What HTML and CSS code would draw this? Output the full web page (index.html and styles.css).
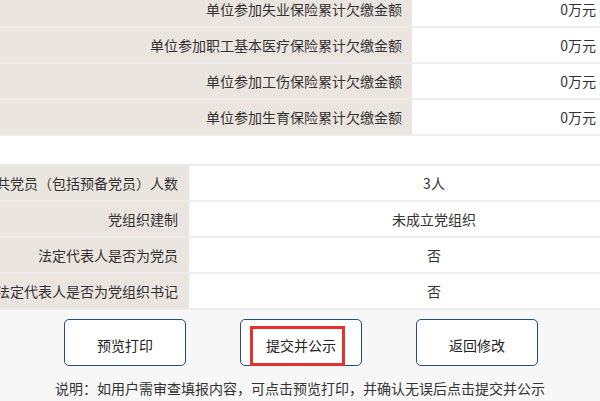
FILE: index.html
```html
<!DOCTYPE html>
<html lang="zh-CN">
<head>
<meta charset="utf-8">
<title>年报确认</title>
<link rel="stylesheet" href="styles.css">
</head>
<body>
<div class="page">
  <div class="table table-top">
    <div class="row"><div class="label">单位参加失业保险累计欠缴金额</div><div class="value">0万元</div></div>
    <div class="row"><div class="label">单位参加职工基本医疗保险累计欠缴金额</div><div class="value">0万元</div></div>
    <div class="row"><div class="label">单位参加工伤保险累计欠缴金额</div><div class="value">0万元</div></div>
    <div class="row"><div class="label">单位参加生育保险累计欠缴金额</div><div class="value">0万元</div></div>
  </div>
  <div class="table table-party">
    <div class="row"><div class="label">共党员（包括预备党员）人数</div><div class="value">3人</div></div>
    <div class="row"><div class="label">党组织建制</div><div class="value">未成立党组织</div></div>
    <div class="row"><div class="label">法定代表人是否为党员</div><div class="value">否</div></div>
    <div class="row"><div class="label">法定代表人是否为党组织书记</div><div class="value">否</div></div>
  </div>
  <div class="actions">
    <div class="buttons">
      <button class="btn" type="button">预览打印</button>
      <button class="btn btn-marked" type="button">提交并公示<span class="mark"></span></button>
      <button class="btn" type="button">返回修改</button>
    </div>
    <p class="note">说明：如用户需审查填报内容，可点击预览打印，并确认无误后点击提交并公示</p>
  </div>
</div>
</body>
</html>
```

FILE: styles.css
```css
* { box-sizing: border-box; }
html, body {
  margin: 0;
  padding: 0;
  background: #ffffff;
}
body {
  font-family: "Noto Sans CJK SC", "Liberation Sans", sans-serif;
  font-size: 14px;
  color: #333333;
}
.page {
  width: 600px;
  height: 401px;
  overflow: hidden;
}
.table .row {
  display: flex;
  height: 36px;
  border-bottom: 2px solid #ececec;
}
.table .label {
  background: #ebe5df;
  display: flex;
  align-items: center;
  justify-content: flex-end;
  white-space: nowrap;
}
.table .value {
  display: flex;
  align-items: center;
  white-space: nowrap;
  background: #ffffff;
}
.table-top {
  margin-top: -8px;
}
.table-top .label {
  width: 412px;
  padding-right: 10px;
}
.table-top .value {
  flex: 1;
  justify-content: flex-end;
  padding-right: 4px;
}
.table-party {
  width: 679px;
  margin-top: 28px;
  border-top: 2px solid #ececec;
}
.table-party .label {
  width: 189px;
  padding-right: 11px;
}
.table-party .value {
  flex: 1;
  justify-content: center;
}
.actions {
  background: #f7f7f7;
  padding-top: 9px;
  height: 200px;
}
.buttons {
  display: flex;
  justify-content: center;
  gap: 54px;
  padding-left: 2px;
}
.btn {
  position: relative;
  width: 122px;
  height: 47px;
  padding: 5px 0 0;
  background: #ffffff;
  border: 1px solid #1f4e85;
  border-radius: 5px;
  font-family: inherit;
  font-size: 14px;
  color: #222222;
}
.mark {
  position: absolute;
  left: 9px;
  top: 6px;
  width: 95px;
  height: 40px;
  border: 3px solid #e8302e;
}
.note {
  margin: 14px 0 0;
  text-align: center;
  line-height: 16px;
  color: #333333;
}
```
